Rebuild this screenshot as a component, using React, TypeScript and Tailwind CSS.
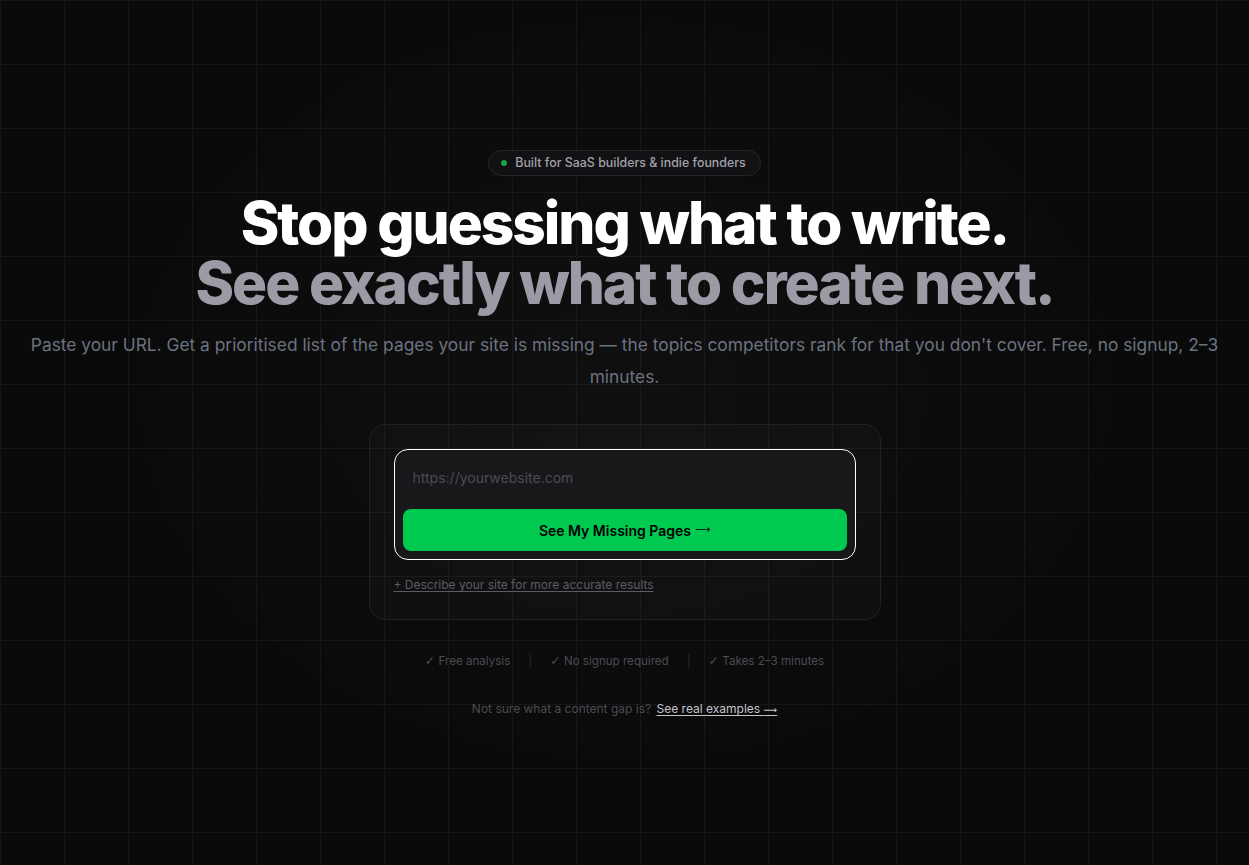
const arrowFont = { fontFamily: "'DejaVu Sans', sans-serif" };

export default function App() {
  return (
    <div
      className="relative min-h-[865px] w-full overflow-hidden bg-[#0a0a0a] bg-[linear-gradient(to_right,#161616_1px,transparent_1px),linear-gradient(to_bottom,#161616_1px,transparent_1px)] bg-[size:64px_64px]"
      style={{ fontFamily: "Inter, 'Noto Sans', sans-serif" }}
    >
      <div className="pointer-events-none absolute inset-0 bg-[radial-gradient(ellipse_at_50%_45%,rgba(255,255,255,0.025),transparent_60%)]" />
      <main className="relative flex flex-col items-center px-6 pt-[150px] text-center">
        <div className="flex h-[26px] items-center gap-2 rounded-full border border-[#26262a] bg-[#121214] pl-3 pr-[14px] text-[12.4px] font-medium text-[#a1a1aa]">
          <span className="h-1.5 w-1.5 rounded-full bg-[#16a34a]" />
          Built for SaaS builders &amp; indie founders
        </div>

        <h1 className="mt-[17px] text-[58.5px] font-extrabold leading-[60px] tracking-[-0.035em]">
          <span className="block text-white">Stop guessing what to write.</span>
          <span className="block text-[#9b9ba5]">See exactly what to create next.</span>
        </h1>

        <p className="mt-4 text-[17.35px] leading-[32px] text-[#6b7280]">
          Paste your URL. Get a prioritised list of the pages your site is missing — the topics competitors rank for that you don't cover. Free, no signup, 2–3 minutes.
        </p>

        <div className="mt-[31px] w-[512px] rounded-2xl border border-[#222225] bg-[rgba(255,255,255,0.02)] px-6 pb-[26px] pt-6 text-left">
          <div className="rounded-[14px] border border-white bg-[#18181b] p-2">
            <input
              type="text"
              placeholder="https://yourwebsite.com"
              className="h-[51px] w-full bg-transparent pb-3 pl-2.5 text-[14px] text-white outline-none placeholder:text-[#4b4b53]"
            />
            <button className="flex h-[42px] w-full items-center justify-center gap-1 rounded-lg bg-[#00c950] text-[14px] font-semibold text-black">
              See My Missing Pages
              <span style={arrowFont} className="text-[10.5px] font-normal">⟶</span>
            </button>
          </div>
          <a href="#" className="mt-[17px] block text-[12px] leading-4 text-[#5b5b68] underline underline-offset-2">
            + Describe your site for more accurate results
          </a>
        </div>

        <div className="mt-[33px] flex items-center gap-[18px] text-[11.6px] leading-4 text-[#4b4b53]">
          <span>
            <span style={arrowFont} className="text-[12.5px]">✓</span> Free analysis
          </span>
          <span className="text-[#2a2a2e]">|</span>
          <span>
            <span style={arrowFont} className="text-[12.5px]">✓</span> No signup required
          </span>
          <span className="text-[#2a2a2e]">|</span>
          <span>
            <span style={arrowFont} className="text-[12.5px]">✓</span> Takes 2–3 minutes
          </span>
        </div>

        <p className="mt-8 text-[12px] leading-4 text-[#4b4b53]">
          Not sure what a content gap is?{" "}
          <a href="#" className="ml-0.5 text-[#c4c4cc] underline underline-offset-2">
            See real examples <span style={arrowFont} className="text-[9.5px]">⟶</span>
          </a>
        </p>
      </main>
    </div>
  );
}
